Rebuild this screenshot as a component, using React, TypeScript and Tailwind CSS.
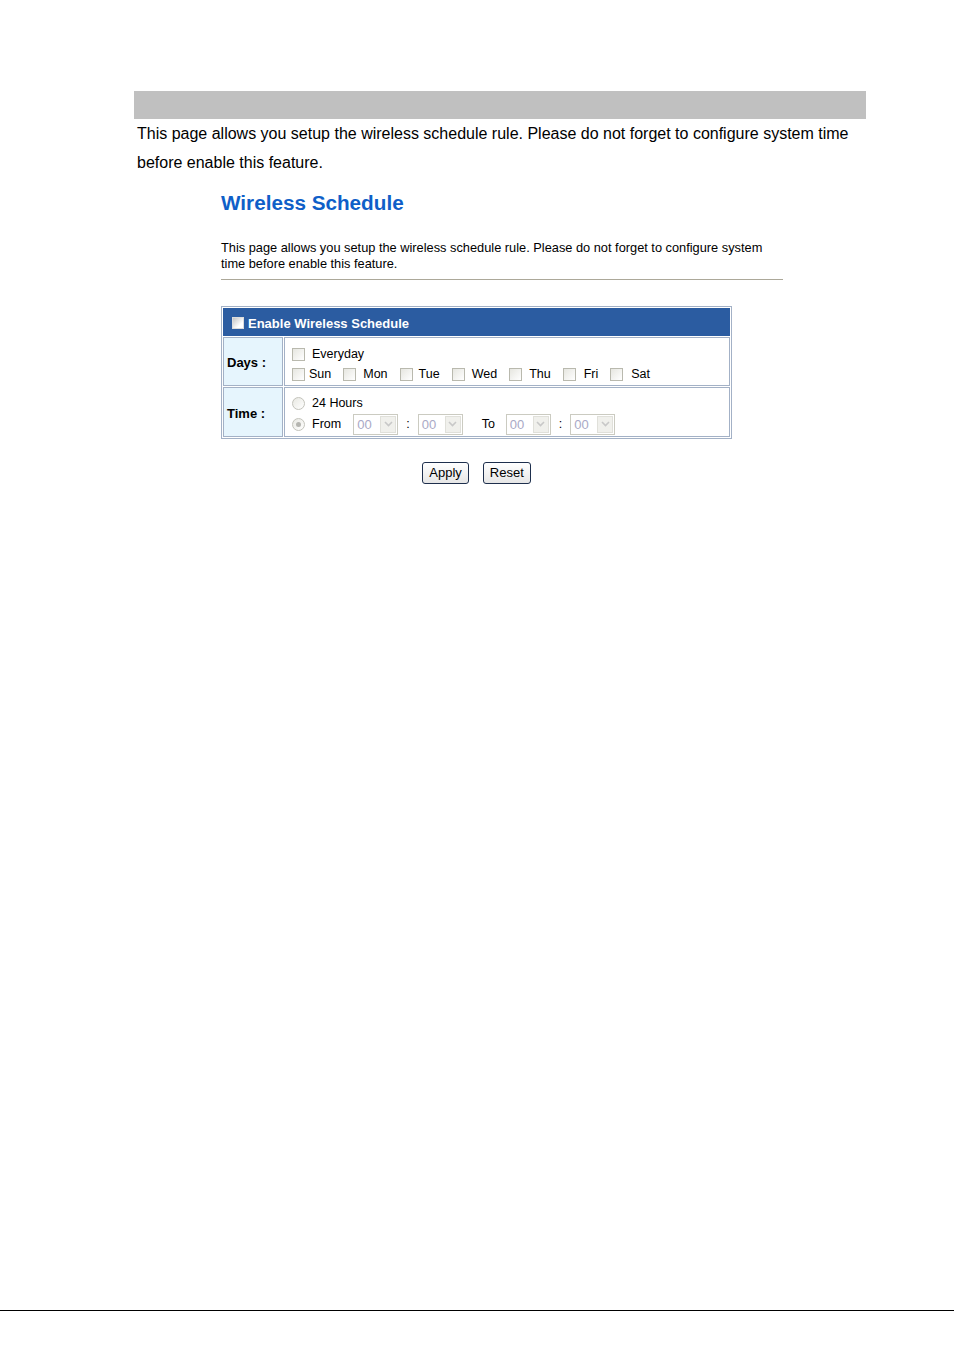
import React from "react";

const font = { fontFamily: '"Liberation Sans", Arial, sans-serif' };

function Box({ className = "" }: { className?: string }) {
  return (
    <span
      className={
        "inline-block w-[13px] h-[13px] shrink-0 border border-[#b9b9ae] bg-[linear-gradient(135deg,#e6e6e0,#ffffff)] " +
        className
      }
    />
  );
}

function Radio({ checked = false }: { checked?: boolean }) {
  return (
    <span className="inline-flex w-[13px] h-[13px] shrink-0 rounded-full border border-[#c3c3bb] bg-[linear-gradient(135deg,#e8e8e2,#ffffff)] items-center justify-center">
      {checked && <span className="w-[5px] h-[5px] rounded-full bg-[#b5b5b0]" />}
    </span>
  );
}

function Sel() {
  return (
    <span className="inline-flex w-[45px] h-[21px] border border-[#cbcbc1] bg-white items-stretch p-[1px]">
      <span className="flex-1 text-[13px] leading-[17px] text-[#a9a9c6] pl-[2px]">00</span>
      <span className="w-[16px] bg-[#f0f0ec] border border-[#e0e0da] flex items-center justify-center">
        <svg width="9" height="6" viewBox="0 0 9 6">
          <path d="M1 1 L4.5 4.5 L8 1" fill="none" stroke="#c8c8c8" strokeWidth="1.6" />
        </svg>
      </span>
    </span>
  );
}

function Day({ label, gap }: { label: string; gap: number }) {
  return (
    <span className="inline-flex items-center mr-[12px]">
      <Box />
      <span style={{ marginLeft: gap }}>{label}</span>
    </span>
  );
}

export default function App() {
  return (
    <div className="h-[1350px] flex flex-col bg-white text-black" style={font}>
      <div className="ml-[134px] w-[732px] mt-[91px]">
        <div className="h-[28px] bg-[#c0c0c0]" />
        <p className="pl-[3px] text-[16px] leading-[29px]">
          This page allows you setup the wireless schedule rule. Please do not forget to configure system time
          before enable this feature.
        </p>

        <div className="ml-[87px] w-[562px]">
          <h1 className="mt-[14px] text-[20.7px] leading-[24px] font-bold text-[#0f5fc8]">Wireless Schedule</h1>
          <p className="mt-[25px] text-[12.8px] leading-[16px]">
            This page allows you setup the wireless schedule rule. Please do not forget to configure system time
            before enable this feature.
          </p>
          <div className="mt-[7px] h-px bg-[#aca899]" />

          <div className="mt-[26px] w-[511px] border border-[#a3b1c6] p-[1px] flex flex-col gap-[1px] text-[12.5px]">
            <div className="h-[28px] bg-[#2b5ca1] flex items-center pl-[9px] pt-[4px] text-white font-bold text-[13px]">
              <span className="inline-block w-[12px] h-[12px] -mt-[2px] bg-[linear-gradient(135deg,#c4c4c4,#ffffff_70%)] border border-[#dcdcdc]" />
              <span className="ml-[4px]">Enable Wireless Schedule</span>
            </div>

            <div className="flex gap-[1px]">
              <div className="w-[60px] border border-[#a3b1c6] bg-[#e6f5fd] flex items-center pl-[3px] pt-[2px] font-bold text-[13px]">
                Days :
              </div>
              <div className="flex-1 h-[49px] border border-[#a3b1c6] bg-white pl-[7px] pt-[6px] flex flex-col">
                <div className="h-[20px] flex items-center">
                  <Box />
                  <span className="ml-[7px]">Everyday</span>
                </div>
                <div className="h-[20px] flex items-center">
                  <Day label="Sun" gap={4} />
                  <Day label="Mon" gap={7} />
                  <Day label="Tue" gap={6} />
                  <Day label="Wed" gap={7} />
                  <Day label="Thu" gap={7} />
                  <Day label="Fri" gap={8} />
                  <Day label="Sat" gap={8} />
                </div>
              </div>
            </div>

            <div className="flex gap-[1px]">
              <div className="w-[60px] border border-[#a3b1c6] bg-[#e6f5fd] flex items-center pl-[3px] pt-[3px] font-bold text-[13px]">
                Time :
              </div>
              <div className="flex-1 h-[50px] border border-[#a3b1c6] bg-white pl-[7px] pt-[6px] flex flex-col">
                <div className="h-[19px] flex items-center">
                  <Radio />
                  <span className="ml-[7px]">24 Hours</span>
                </div>
                <div className="h-[22px] flex items-center">
                  <Radio checked />
                  <span className="ml-[7px] mr-[12px]">From</span>
                  <Sel />
                  <span className="ml-[8px] mr-[8px]">:</span>
                  <Sel />
                  <span className="ml-[19px] mr-[11px]">To</span>
                  <Sel />
                  <span className="ml-[8px] mr-[8px]">:</span>
                  <Sel />
                </div>
              </div>
            </div>
          </div>

          <div className="w-[511px] mt-[23px] flex justify-center gap-[14px]">
            <button className="h-[22px] px-[6px] border border-[#1e2f4d] rounded-[3px] bg-[linear-gradient(#ffffff,#e6e6e6)] text-[13px] leading-[18px]">
              Apply
            </button>
            <button className="h-[22px] px-[6px] border border-[#1e2f4d] rounded-[3px] bg-[linear-gradient(#ffffff,#e6e6e6)] text-[13px] leading-[18px]">
              Reset
            </button>
          </div>
        </div>
      </div>
      <div className="mt-auto mb-[39px] h-px bg-black" />
    </div>
  );
}
